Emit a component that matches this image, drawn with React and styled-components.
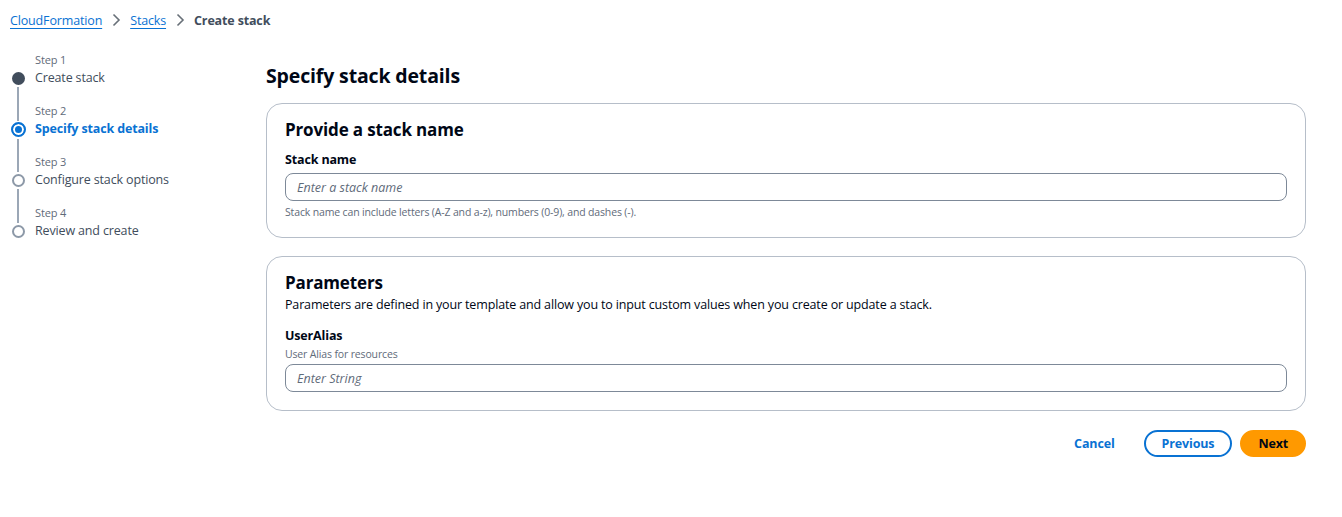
import React from "react";
import styled, { createGlobalStyle } from "styled-components";

const Global = createGlobalStyle`
  body {
    margin: 0;
    background: #fff;
    font-family: "Open Sans", "Noto Sans", Arial, sans-serif;
    letter-spacing: -0.15px;
    color: #000716;
  }
`;

const Page = styled.div`
  padding: 10px 36px 40px 10px;
`;

const Crumbs = styled.nav`
  display: flex;
  align-items: center;
  gap: 9px;
  font-size: 12.5px;
  height: 20px;
`;

const CrumbLink = styled.a`
  color: #0972d3;
  text-decoration: underline;
  text-underline-offset: 3px;
`;

const CrumbCurrent = styled.span`
  color: #414d5c;
  font-weight: 700;
`;

const Layout = styled.div`
  display: grid;
  grid-template-columns: 256px 1fr;
  margin-top: 22px;
`;

const Steps = styled.ol`
  list-style: none;
  margin: 0;
  padding: 0;
`;

const Step = styled.li`
  display: grid;
  grid-template-columns: 16px 1fr;
  column-gap: 9px;
  height: 51px;
`;

const Rail = styled.div`
  display: flex;
  flex-direction: column;
  align-items: center;
  padding-top: 20px;
`;

const Dot = styled.span`
  box-sizing: border-box;
  flex: none;
  border-radius: 50%;
  width: ${(p) => (p.kind === "active" ? 15 : 13)}px;
  height: ${(p) => (p.kind === "active" ? 15 : 13)}px;
  margin-top: ${(p) => (p.kind === "active" ? -1 : 0)}px;
  background: ${(p) => (p.kind === "done" ? "#414d5c" : p.kind === "active" ? "#0972d3" : "#fff")};
  border: ${(p) => (p.kind === "active" ? "2px solid #0972d3" : p.kind === "todo" ? "2px solid #8d99a8" : "none")};
  box-shadow: ${(p) => (p.kind === "active" ? "inset 0 0 0 2px #fff" : "none")};
`;

const Line = styled.span`
  width: 2px;
  flex: 1;
  background: #9ba7b6;
  margin-top: 2px;
  margin-bottom: -18px;
`;

const StepText = styled.div`
  display: flex;
  flex-direction: column;
`;

const StepNo = styled.span`
  font-size: 11px;
  color: #5f6b7a;
  line-height: 16px;
`;

const StepName = styled.span`
  font-size: 12.5px;
  line-height: 18px;
  margin-top: 1px;
  color: ${(p) => (p.active ? "#0972d3" : "#414d5c")};
  font-weight: ${(p) => (p.active ? 700 : 400)};
`;

const Main = styled.main`
  display: flex;
  flex-direction: column;
`;

const H1 = styled.h1`
  margin: 0;
  font-size: 19.5px;
  line-height: 28px;
  font-weight: 700;
  padding-top: 10px;
  margin-bottom: 13px;
`;

const Card = styled.section`
  border: 1px solid #b6bec9;
  border-radius: 16px;
  padding: 14px 18px 17px;
  margin-bottom: 18px;
`;

const H2 = styled.h2`
  margin: 0;
  font-size: 17px;
  line-height: 24px;
  font-weight: 700;
`;

const Desc = styled.p`
  margin: 0;
  font-size: 12.5px;
  line-height: 20px;
  color: #000716;
`;

const Field = styled.div`
  margin-top: ${(p) => p.top || 10}px;
  display: flex;
  flex-direction: column;
`;

const Label = styled.label`
  font-size: 12.5px;
  font-weight: 700;
  line-height: 20px;
`;

const Small = styled.span`
  font-size: 10.5px;
  line-height: 16px;
  color: #5f6b7a;
`;

const Input = styled.input`
  box-sizing: border-box;
  height: 28px;
  margin: ${(p) => p.m || "3px 0 3px"};
  border: 1px solid #7d8998;
  border-radius: 8px;
  padding: 0 11px;
  font-family: inherit;
  font-size: 12.5px;
  &::placeholder {
    color: #5f6b7a;
    font-style: italic;
  }
`;

const Actions = styled.div`
  display: flex;
  justify-content: flex-end;
  align-items: center;
  gap: 8px;
  margin-top: 1px;
`;

const Button = styled.button`
  font-family: inherit;
  font-size: 12.5px;
  letter-spacing: -0.15px;
  font-weight: 700;
  height: 27px;
  border-radius: 20px;
  padding: 0 16px;
  cursor: pointer;
  border: 2px solid ${(p) => (p.variant === "primary" ? "#ff9900" : p.variant === "normal" ? "#0972d3" : "transparent")};
  background: ${(p) => (p.variant === "primary" ? "#ff9900" : "#fff")};
  color: ${(p) => (p.variant === "primary" ? "#000716" : "#0972d3")};
  margin-right: ${(p) => (p.variant === "link" ? 3 : 0)}px;
`;

const Chevron = () => (
  <svg width="10" height="14" viewBox="0 0 10 14" fill="none">
    <path d="M2.5 1.5 8 7l-5.5 5.5" stroke="#687078" strokeWidth="1.6" />
  </svg>
);

const steps = [
  { n: 1, name: "Create stack", kind: "done" },
  { n: 2, name: "Specify stack details", kind: "active" },
  { n: 3, name: "Configure stack options", kind: "todo" },
  { n: 4, name: "Review and create", kind: "todo" },
];

export default function App() {
  return (
    <>
      <Global />
      <Page>
        <Crumbs>
          <CrumbLink href="#">CloudFormation</CrumbLink>
          <Chevron />
          <CrumbLink href="#">Stacks</CrumbLink>
          <Chevron />
          <CrumbCurrent>Create stack</CrumbCurrent>
        </Crumbs>
        <Layout>
          <Steps>
            {steps.map((s, i) => (
              <Step key={s.n}>
                <Rail>
                  <Dot kind={s.kind} />
                  {i < steps.length - 1 && <Line />}
                </Rail>
                <StepText>
                  <StepNo>Step {s.n}</StepNo>
                  <StepName active={s.kind === "active"}>{s.name}</StepName>
                </StepText>
              </Step>
            ))}
          </Steps>
          <Main>
            <H1>Specify stack details</H1>
            <Card>
              <H2>Provide a stack name</H2>
              <Field top={8}>
                <Label>Stack name</Label>
                <Input placeholder="Enter a stack name" />
                <Small>Stack name can include letters (A-Z and a-z), numbers (0-9), and dashes (-).</Small>
              </Field>
            </Card>
            <Card>
              <H2>Parameters</H2>
              <Desc>
                Parameters are defined in your template and allow you to input custom values when you create or update a stack.
              </Desc>
              <Field top={11}>
                <Label>UserAlias</Label>
                <Small>User Alias for resources</Small>
                <Input m="2px 0 1px" placeholder="Enter String" />
              </Field>
            </Card>
            <Actions>
              <Button variant="link">Cancel</Button>
              <Button variant="normal">Previous</Button>
              <Button variant="primary">Next</Button>
            </Actions>
          </Main>
        </Layout>
      </Page>
    </>
  );
}
